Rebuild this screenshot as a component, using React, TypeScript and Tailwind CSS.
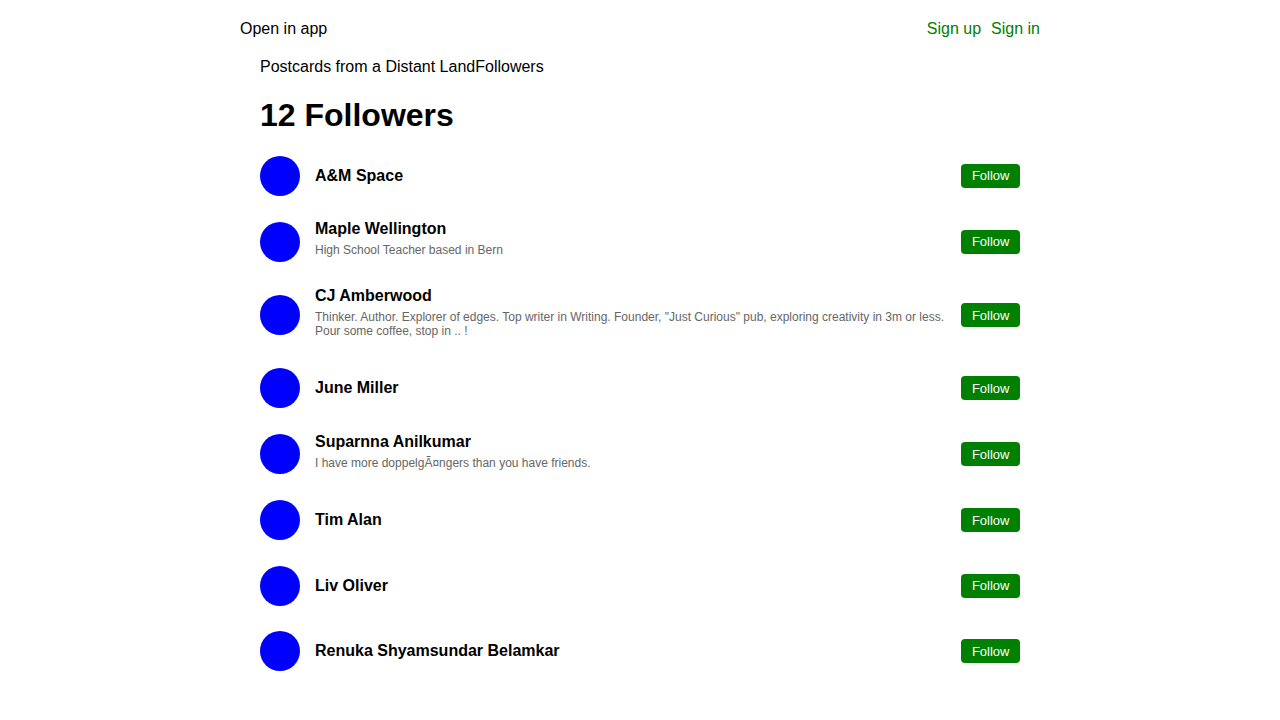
const followers = [
  { name: 'A&M Space', bio: '' },
  { name: 'Maple Wellington', bio: 'High School Teacher based in Bern' },
  {
    name: 'CJ Amberwood',
    bio: 'Thinker. Author. Explorer of edges. Top writer in Writing. Founder, "Just Curious" pub, exploring creativity in 3m or less. Pour some coffee, stop in .. !',
  },
  { name: 'June Miller', bio: '' },
  { name: 'Suparnna Anilkumar', bio: 'I have more doppelgÃ¤ngers than you have friends.' },
  { name: 'Tim Alan', bio: '' },
  { name: 'Liv Oliver', bio: '' },
  { name: 'Renuka Shyamsundar Belamkar', bio: '' },
]

export default function App() {
  return (
    <div className="min-h-screen bg-white text-black font-['Liberation_Sans',Arial,sans-serif]">
      <div className="mx-auto w-[800px]">
        <header className="flex h-[57px] items-center justify-between text-base">
          <span>Open in app</span>
          <div className="flex gap-[10px] text-[#008000]">
            <a>Sign up</a>
            <a>Sign in</a>
          </div>
        </header>

        <main className="px-5">
          <div className="text-base leading-5">Postcards from a Distant LandFollowers</div>
          <h1 className="mt-[20px] text-[32px] font-bold leading-[37px]">12 Followers</h1>

          <ul className="mt-[9px]">
            {followers.map(f => (
              <li key={f.name} className="flex items-center py-[12.75px]">
                <div className="h-10 w-10 shrink-0 rounded-full bg-[#0000ff]" />
                <div className={`ml-[15px] flex-1 pr-4 ${f.bio ? 'pb-[5px]' : ''}`}>
                  <div className="text-base font-bold leading-4">{f.name}</div>
                  {f.bio && (
                    <p className="mt-1.5 text-xs leading-[14px] text-[#666]">{f.bio}</p>
                  )}
                </div>
                <button className="h-[24px] shrink-0 rounded bg-[#008000] px-[10.5px] text-[13px] text-white">
                  Follow
                </button>
              </li>
            ))}
          </ul>
        </main>
      </div>
    </div>
  )
}
